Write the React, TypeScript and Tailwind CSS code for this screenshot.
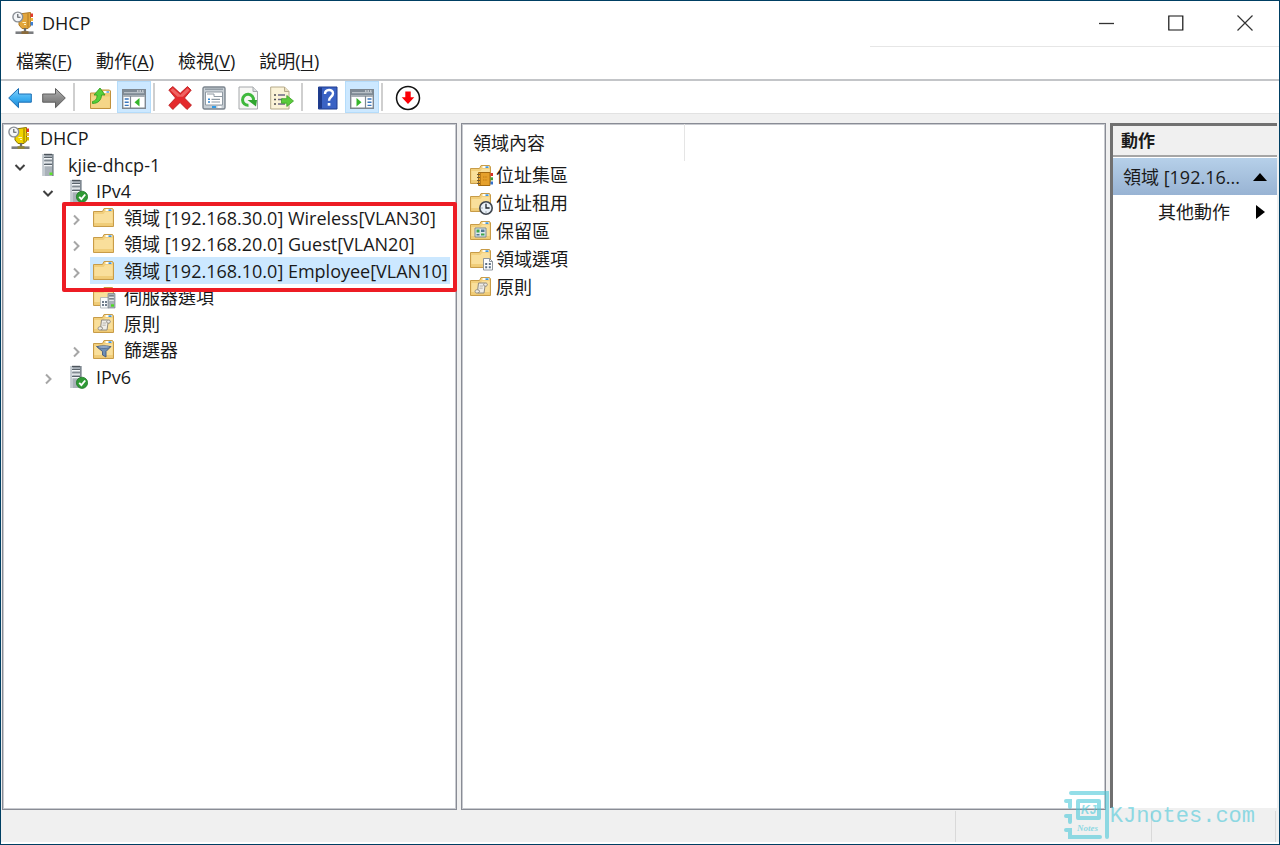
import type { ReactNode } from "react";

function Svg({ size = 24, children }: { size?: number; children: ReactNode }) {
  return (
    <svg width={size} height={size} viewBox="0 0 24 24" fill="none" aria-hidden="true" className="shrink-0">
      {children}
    </svg>
  );
}

/* ---------- DHCP console icons ---------- */

function DhcpIcon({ bright = false }: { bright?: boolean }) {
  const body = bright ? "#f0d400" : "#e3a63c";
  const edge = bright ? "#8a7400" : "#b07a22";
  return (
    <Svg>
      <path d="M7 3 18.500 1.500V15L16 17.500H10L7 14z" fill={body} stroke={edge} strokeWidth="1" />
      <path d="M16 2.500v14" stroke={edge} strokeWidth="1" />
      <path d="M10.500 11.500h3.500M12 13.500h2" stroke="#fff3c4" strokeWidth="1" />
      <path d="M18.500 2.500h2.500v3.500h-2.500z" fill="#e23b2e" />
      <path d="M18.500 7h2.500v3h-2.500z" fill="#efb63a" />
      <path d="M18.500 11h2.500v3.500h-2.500z" fill={bright ? "#d6b800" : "#3b7fd4"} />
      <path d="M13 17v4" stroke="#6e6e6e" strokeWidth="2.400" />
      <path d="M3.500 21.700h18" stroke="#7b7d80" strokeWidth="2.600" />
      <path d="M9.500 20.200h7v2.800h-7z" fill={bright ? "#8f8538" : "#8a6a3a"} />
      <circle cx="5.800" cy="6" r="4.900" fill="#f4f6f8" stroke="#8b9096" strokeWidth="1.400" />
      <path d="M5.800 3v3.200h2.700" stroke="#50555b" strokeWidth="1.100" />
    </Svg>
  );
}

function ServerShape() {
  return (
    <>
      <path d="M6.500 1h11v22h-11z" fill="#a9b1b9" />
      <path d="M6.500 1h2.500v22H6.500z" fill="#c3cad0" />
      <path d="M16 1h1.500v22H16z" fill="#7f8890" />
      <path d="M8 1.500h8" stroke="#4d555c" strokeWidth="1.400" />
      <path d="M8 4.500h8M8 8h8M8 11.500h8" stroke="#5b646c" strokeWidth="1.200" />
      <path d="M8 5.700h8M8 9.200h8M8 12.700h8" stroke="#f3f6f8" strokeWidth="1.200" />
    </>
  );
}

function ServerIcon() {
  return (
    <Svg>
      <ServerShape />
      <path d="M13.500 19.500h3v2.500h-3z" fill="#5be22a" />
    </Svg>
  );
}

function ServerOkIcon() {
  return (
    <Svg>
      <ServerShape />
      <circle cx="18" cy="17.800" r="5.600" fill="#2f9a35" stroke="#1f7a28" strokeWidth=".8" />
      <path d="m15.200 17.800 2.200 2.300 3.800-4.600" stroke="#fff" strokeWidth="1.900" />
    </Svg>
  );
}

function FolderShape() {
  return (
    <>
      <path d="M1.500 5.500h9l1.500-3h8.500l1 1.500v16.500h-20z" fill="#f2cf7c" stroke="#c89c48" strokeWidth="1" />
      <path d="M2.500 8h9l1.500-2h7.500v13.500h-18z" fill="#f9df9b" />
      <path d="M2 17h19v3H2z" fill="#edc46b" opacity=".7" />
      <path d="M13.500 3h6.500v2h-6.500z" fill="#fffdf4" />
      <path d="M16.500 3.300h3V5h-3z" fill="#3f94dd" />
    </>
  );
}

function FolderIcon() {
  return (
    <Svg>
      <FolderShape />
    </Svg>
  );
}

function ServerOptionsIcon() {
  return (
    <Svg>
      <FolderShape />
      <path d="M8.500 12.500h8V23h-8z" fill="#f8fafc" stroke="#a7adb4" strokeWidth=".8" />
      <path d="M10 16h2v2h-2zm3 0h2v2h-2zm-3 3h2v2h-2zm3 0h2v2h-2z" fill="#6f7c8b" />
      <path d="M16 8.500h7V23h-7z" fill="#a9b1b9" stroke="#7c858d" strokeWidth=".7" />
      <path d="M17.200 11h4.600m-4.600 3h4.600" stroke="#4d555c" strokeWidth="1" />
      <path d="M17.200 12.200h4.600m-4.600 3h4.600" stroke="#fff" strokeWidth="1" />
      <path d="M19 19.300h3v2.400h-3z" fill="#4bdc20" />
    </Svg>
  );
}

function PolicyIcon() {
  return (
    <Svg>
      <FolderShape />
      <path
        d="M9.500 8h7.700c1.500.4 1.500 2.800 0 3.200H16l-1 6.800H7.500c-2-.3-1.800-3 0-3.200h1.200z"
        fill="#efede8"
        stroke="#8f8a80"
        strokeWidth="1"
      />
      <path d="M15.200 8.500c-1 1-.6 2.500.8 2.700M9 14.800c2 .2 2 2.700.2 3" stroke="#8f8a80" strokeWidth="1" />
      <path d="M10.700 11h3.400m-3.700 2.200h3.300" stroke="#a9a59c" strokeWidth=".8" />
    </Svg>
  );
}

function FilterIcon() {
  return (
    <Svg>
      <FolderShape />
      <path d="M4.500 8.500h14.500l-5 5V19l-3.500-2v-3.500z" fill="#6f8fb5" stroke="#42587a" strokeWidth=".9" />
      <ellipse cx="11.800" cy="9" rx="6.500" ry="1.300" fill="#9db6d4" stroke="#42587a" strokeWidth=".7" />
    </Svg>
  );
}

function PoolIcon() {
  return (
    <Svg>
      <FolderShape />
      <path d="M9.500 9.500H21V22.500H9.500z" fill="#e5a02b" stroke="#a56a10" strokeWidth="1" />
      <path d="M11.500 10v12" stroke="#b97a18" strokeWidth="1" />
      <path d="M8 11.500h3m-3 3h3m-3 3h3m-3 3h3" stroke="#6e5a34" strokeWidth="1" />
      <path d="M14 14h4.500M14 17h4.500" stroke="#c47d12" strokeWidth="1.200" strokeDasharray="1.500 .7" />
      <path d="M21.500 10H24v3h-2.500z" fill="#d92f25" />
      <path d="M21.500 14.300H24v3h-2.500z" fill="#3f9d3a" />
      <path d="M21.500 18.500H24v3h-2.500z" fill="#3272cf" />
    </Svg>
  );
}

function LeaseIcon() {
  return (
    <Svg>
      <FolderShape />
      <circle cx="17" cy="17" r="6.200" fill="#e8f0f8" stroke="#40474f" strokeWidth="1.600" />
      <path d="M17 12.800V17h3.600" stroke="#20262c" strokeWidth="1.300" />
      <path d="M17 20.500v1M12.500 17h1" stroke="#68727c" strokeWidth="1" />
    </Svg>
  );
}

function ReservationIcon() {
  return (
    <Svg>
      <FolderShape />
      <path d="M6 9h11v9H6z" fill="#dfe8ee" stroke="#7d8b93" strokeWidth="1" />
      <path d="M7.500 10.500h3v3h-3zM12 14.500h3.500v2H12z" fill="#3da54a" />
      <path d="M12 10.500h3.500v2.500H12zM7.500 15h3v1.500h-3z" fill="#4f7690" />
    </Svg>
  );
}

function ScopeOptionsIcon() {
  return (
    <Svg>
      <FolderShape />
      <path d="M14.500 11.500h6l3 3V23h-9z" fill="#fbfcfd" stroke="#858c94" strokeWidth=".9" />
      <path d="M20.500 11.500v3h3" stroke="#858c94" strokeWidth=".9" />
      <path d="M16.200 16h2v2h-2zm3.600 0h2v2h-2zm-3.600 3.300h2v2h-2zm3.600 0h2v2h-2z" fill="#5b6d82" />
    </Svg>
  );
}

/* ---------- Toolbar icons ---------- */

function Arrow({ forward = false }: { forward?: boolean }) {
  return (
    <Svg>
      <defs>
        <linearGradient id={forward ? "arrowF" : "arrowB"} x1="0" y1="0" x2="0" y2="1">
          <stop offset="0" stopColor={forward ? "#b5b5b5" : "#8bd3fa"} />
          <stop offset=".5" stopColor={forward ? "#8c8c8c" : "#3fb0f2"} />
          <stop offset="1" stopColor={forward ? "#6d6d6d" : "#1f86d3"} />
        </linearGradient>
      </defs>
      <path
        d={forward ? "M23.300 12 13.500 2.500V8H.700v8.200h12.800v5.500z" : "M.700 12l9.800-9.500V8h12.800v8.200H10.500v5.500z"}
        fill={forward ? "url(#arrowF)" : "url(#arrowB)"}
        stroke={forward ? "#5e5e5e" : "#1b6fb5"}
        strokeWidth="1"
        strokeLinejoin="round"
      />
    </Svg>
  );
}

function UpFolderIcon() {
  return (
    <Svg>
      <path d="M2.500 7h8l2-3h9l1 1v17.500h-20z" fill="#f0cb74" stroke="#c1923c" strokeWidth="1" />
      <path d="M3.200 10.500h18.600v11.300H3.200z" fill="#f5d688" />
      <path d="M15.500 5h6v2h-6z" fill="#fff" />
      <path d="M18.500 5.300H21v1.400h-2.500z" fill="#3f94dd" />
      <path
        d="M4.500 15.500c3.500-.8 4.500-3 4.500-6.500H6L12 2l5 7h-3.500c0 5-3.500 8.500-9 8.500z"
        fill="#55cf3a"
        stroke="#2c9a1d"
        strokeWidth=".8"
      />
    </Svg>
  );
}

function PaneIcon({ right = false }: { right?: boolean }) {
  return (
    <Svg>
      <path d="M.700 3.700h22.600v18.600H.700z" fill="#fff" stroke="#7e8790" strokeWidth="1.400" />
      <path d="M1 4h22v5H1z" fill="#7f8a94" />
      <path d="M2 6.700h20" stroke="#c5ccd2" strokeWidth="1" />
      <path d="M15 5h1.500m1 0H19m1 0h1.500" stroke="#fff" strokeWidth="1.200" />
      <path d="M1 10h22" stroke="#a9b0b6" strokeWidth="2" />
      {right ? (
        <>
          <path d="M15.500 10v12" stroke="#7e8790" strokeWidth="1.200" />
          <path d="M17.500 13h4m-4 3.200h4m-4 3.200h4" stroke="#3976bd" strokeWidth="1.400" />
          <path d="m6.500 12 5 4.200-5 4.200z" fill="#35b52b" />
        </>
      ) : (
        <>
          <path d="M8.500 10v12" stroke="#7e8790" strokeWidth="1.200" />
          <path d="M2.700 13h4m-4 3.200h4m-4 3.200h4" stroke="#3976bd" strokeWidth="1.400" />
          <path d="m17.500 12-5 4.200 5 4.200z" fill="#35b52b" />
        </>
      )}
    </Svg>
  );
}

function DeleteIcon() {
  return (
    <Svg>
      <path
        d="M.800 4 4.800.500l7.400 6.800L19.500.500l3.700 3.700L16.500 12l7 7.200-4.500 4.300-7-7-7.200 7-4-4.300L7.500 12z"
        fill="#e42a2d"
        stroke="#b51518"
        strokeWidth=".8"
        strokeLinejoin="round"
      />
      <path d="m2.500 4.200 2.300-2 7.500 6.900 7.200-6.900 2 2-6.500 6.600H9.500z" fill="#f27c79" opacity=".7" />
    </Svg>
  );
}

function PropertiesIcon() {
  return (
    <Svg>
      <rect x="1" y="1" width="22" height="22" rx="1.500" fill="#c9d0d6" stroke="#7c858e" strokeWidth="1.400" />
      <path d="M3 3.200h18" stroke="#8a949d" strokeWidth="1.300" />
      <path d="M3.500 6h17v13h-17z" fill="#fff" stroke="#909aa3" strokeWidth="1" />
      <path d="M5 8h7v2.500h8" stroke="#909aa3" strokeWidth="1" />
      <path d="M6 13.300h2M6 16h2" stroke="#3487cf" strokeWidth="1.500" />
      <path d="M9.500 13.300H18M9.500 16H18" stroke="#8f9aa4" strokeWidth="1.200" />
      <path d="M10 21h4" stroke="#1f96e8" strokeWidth="1.800" />
      <path d="M15.500 21h4" stroke="#fff" strokeWidth="1.800" />
    </Svg>
  );
}

function RefreshIcon() {
  return (
    <Svg>
      <path d="M3 1h14l4.500 4.500V23H3z" fill="#f7f7f5" stroke="#a5a8ab" strokeWidth="1" />
      <path d="M17 1v4.500h4.500" fill="#dde0e2" stroke="#a5a8ab" strokeWidth="1" />
      <path d="M12.500 19.300a5.500 5.500 0 1 1 5-4.800" stroke="#3fb83c" strokeWidth="3" />
      <path d="M11.500 14h9.500l-1 6.500z" fill="#2fa52e" />
    </Svg>
  );
}

function ExportIcon() {
  return (
    <Svg>
      <path d="M.700 1h13.800L19 5.500V23H.700z" fill="#fbf3d8" stroke="#b5aa8a" strokeWidth="1" />
      <path d="M14.500 1v4.500H19" fill="#e9dfbd" stroke="#b5aa8a" strokeWidth="1" />
      <path d="M4 9h2M4 13.500h2M4 18h2" stroke="#4d4d4d" strokeWidth="1.500" />
      <path d="M8 9h7M8 13.500h5M8 18h7" stroke="#6e6a85" strokeWidth="1.300" />
      <path d="M11.500 12.700h5.300V9.500L23.500 15l-6.700 5.500v-3.300h-5.300z" fill="#5bcb3c" stroke="#3a9e24" strokeWidth=".8" />
    </Svg>
  );
}

function HelpIcon() {
  return (
    <Svg>
      <path d="M2.500 1h18.500v22h-18.500z" fill="#3a62c4" stroke="#1f3d8f" strokeWidth="1" />
      <path d="M3 1.500h3v21H3z" fill="#1e3a8a" />
      <path d="M9 8c0-5.300 8-5.300 8-.5 0 3.300-4 3.300-4 7.200" stroke="#fff" strokeWidth="2.400" />
      <path d="M11.700 17h2.700v2.700h-2.700z" fill="#fff" />
    </Svg>
  );
}

function DownCircleIcon() {
  return (
    <Svg size={26}>
      <circle cx="12" cy="12" r="10.600" fill="#fff" stroke="#111" strokeWidth="1.400" />
      <path d="M9.500 6h5v5.200h3.300L12 17.500l-5.800-6.300h3.300z" fill="#fb0007" />
    </Svg>
  );
}

function Chevron({ open = false }: { open?: boolean }) {
  return (
    <svg width="12" height="12" viewBox="0 0 12 12" fill="none" aria-hidden="true">
      {open ? (
        <path d="m1.500 4 4.500 4.500L10.500 4" stroke="#404040" strokeWidth="2" />
      ) : (
        <path d="m4 1.500 4.500 4.500L4 10.500" stroke="#a6a6a6" strokeWidth="2" />
      )}
    </svg>
  );
}

/* ---------- Data ---------- */

type TreeNode = {
  label: string;
  indent: string;
  icon: ReactNode;
  state?: "open" | "closed";
  root?: boolean;
  selected?: boolean;
};

const tree: TreeNode[] = [
  { label: "DHCP", indent: "pl-0", icon: <DhcpIcon bright />, root: true },
  { label: "kjie-dhcp-1", indent: "pl-0", icon: <ServerIcon />, state: "open" },
  { label: "IPv4", indent: "pl-7", icon: <ServerOkIcon />, state: "open" },
  { label: "領域 [192.168.30.0] Wireless[VLAN30]", indent: "pl-14", icon: <FolderIcon />, state: "closed" },
  { label: "領域 [192.168.20.0] Guest[VLAN20]", indent: "pl-14", icon: <FolderIcon />, state: "closed" },
  { label: "領域 [192.168.10.0] Employee[VLAN10]", indent: "pl-14", icon: <FolderIcon />, state: "closed", selected: true },
  { label: "伺服器選項", indent: "pl-14", icon: <ServerOptionsIcon /> },
  { label: "原則", indent: "pl-14", icon: <PolicyIcon /> },
  { label: "篩選器", indent: "pl-14", icon: <FilterIcon />, state: "closed" },
  { label: "IPv6", indent: "pl-7", icon: <ServerOkIcon />, state: "closed" },
];

const contents: { label: string; icon: ReactNode }[] = [
  { label: "位址集區", icon: <PoolIcon /> },
  { label: "位址租用", icon: <LeaseIcon /> },
  { label: "保留區", icon: <ReservationIcon /> },
  { label: "領域選項", icon: <ScopeOptionsIcon /> },
  { label: "原則", icon: <PolicyIcon /> },
];

const menus = [
  { label: "檔案", key: "F" },
  { label: "動作", key: "A" },
  { label: "檢視", key: "V" },
  { label: "說明", key: "H" },
];

/* ---------- Pieces ---------- */

function ToolButton({ label, active = false, children }: { label: string; active?: boolean; children: ReactNode }) {
  return (
    <button
      type="button"
      aria-label={label}
      aria-pressed={active || undefined}
      className={
        active
          ? "flex h-8 w-[34px] items-center justify-center border border-[#b5dcfa] bg-[#cce8ff] pt-px"
          : "flex h-8 w-[34px] items-center justify-center pt-px"
      }
    >
      {children}
    </button>
  );
}

function Separator() {
  return <div className="mr-2 ml-0.5 h-7 w-0.5 bg-[#cfcfcf]" />;
}

function TitleBar() {
  return (
    <header className="flex h-11 items-center pl-[11px]">
      <DhcpIcon />
      <h1 className="ml-1.5 flex-1 pb-px text-[18px] leading-6">DHCP</h1>
      <button type="button" aria-label="Minimize" className="flex h-full w-[69px] items-center justify-center">
        <svg width="16" height="16" viewBox="0 0 16 16" aria-hidden="true">
          <path d="M0 8.500h15" stroke="#333" strokeWidth="1.300" />
        </svg>
      </button>
      <button type="button" aria-label="Maximize" className="flex h-full w-[69px] items-center justify-center">
        <svg width="16" height="16" viewBox="0 0 16 16" fill="none" aria-hidden="true">
          <path d="M.800 1h14v14H.800z" stroke="#111" strokeWidth="1.200" />
        </svg>
      </button>
      <button type="button" aria-label="Close" className="flex h-full w-[69px] items-center justify-center">
        <svg width="16" height="16" viewBox="0 0 16 16" aria-hidden="true">
          <path d="m.500.500 15 15m0-15-15 15" stroke="#333" strokeWidth="1.200" />
        </svg>
      </button>
    </header>
  );
}

function MenuBar() {
  return (
    <nav className="relative flex h-[34px] items-center gap-6 pb-0.5 pl-[15px]">
      <div className="absolute top-px right-0 left-[68%] h-px bg-[#e6e6e6]" />
      {menus.map((m) => (
        <button key={m.key} type="button" className="text-[18px] leading-6 whitespace-nowrap">
          {m.label}(<span className="underline underline-offset-2">{m.key}</span>)
        </button>
      ))}
    </nav>
  );
}

function Toolbar() {
  return (
    <div role="toolbar" className="flex h-[35px] items-center border-t-2 border-b border-t-[#c3c5c8] border-b-[#e2e2e2] pl-0.5">
      <ToolButton label="Back"><Arrow /></ToolButton>
      <ToolButton label="Forward"><Arrow forward /></ToolButton>
      <Separator />
      <ToolButton label="Up one level"><UpFolderIcon /></ToolButton>
      <ToolButton label="Console tree" active><PaneIcon /></ToolButton>
      <Separator />
      <ToolButton label="Delete"><DeleteIcon /></ToolButton>
      <ToolButton label="Properties"><PropertiesIcon /></ToolButton>
      <ToolButton label="Refresh"><RefreshIcon /></ToolButton>
      <ToolButton label="Export list"><ExportIcon /></ToolButton>
      <Separator />
      <ToolButton label="Help"><HelpIcon /></ToolButton>
      <ToolButton label="Action pane" active><PaneIcon right /></ToolButton>
      <Separator />
      <ToolButton label="Deactivate"><DownCircleIcon /></ToolButton>
    </div>
  );
}

function TreePane() {
  return (
    <section className="relative w-[455px] shrink-0 border border-[#898c95] bg-white pt-px pl-[3px] shadow-[inset_0_0_0_1px_#c8cacf]">
      <ul>
        {tree.map((n, i) => (
          <li key={i} className={`flex odd:h-[26px] even:h-[27px] ${n.indent}`}>
            {!n.root && (
              <span className="flex w-7 shrink-0 items-center justify-center pt-1">
                {n.state && (
                  <button type="button" aria-label={`${n.label} ${n.state}`}>
                    <Chevron open={n.state === "open"} />
                  </button>
                )}
              </span>
            )}
            <button
              type="button"
              className={
                n.selected
                  ? "flex h-full items-center bg-[#cce8ff] pr-0.5 text-[18px] leading-6 whitespace-nowrap"
                  : "flex h-full items-center pr-0.5 text-[18px] leading-6 whitespace-nowrap"
              }
            >
              <span className="mr-1.5 flex w-7 shrink-0 justify-center">{n.icon}</span>
              {n.label}
            </button>
          </li>
        ))}
      </ul>
      <div className="pointer-events-none absolute top-[78px] -right-px left-[59px] h-[90px] rounded-xs border-4 border-[#ed1c24]" />
    </section>
  );
}

function ContentPane() {
  return (
    <section className="min-w-0 flex-1 border border-[#898c95] bg-white pl-px shadow-[inset_0_0_0_1px_#c8cacf]">
      <table className="border-separate border-spacing-0">
        <thead>
          <tr>
            <th className="h-[37px] w-[222px] border-r border-[#e5e5e5] pl-2.5 text-left text-[18px] leading-6 font-normal">
              領域內容
            </th>
          </tr>
        </thead>
        <tbody>
          {contents.map((c) => (
            <tr key={c.label}>
              <td className="h-7 p-0 pl-1.5">
                <span className="flex items-center gap-[3px] text-[18px] leading-6">
                  {c.icon}
                  {c.label}
                </span>
              </td>
            </tr>
          ))}
        </tbody>
      </table>
    </section>
  );
}

function ActionsPane() {
  return (
    <aside className="mb-0.5 w-[167px] shrink-0 border-t-[3px] border-l-[3px] border-[#707070] bg-white">
      <h2 className="flex h-[31px] items-center border-b-2 border-[#a5a5a5] bg-[#f0f0f0] pl-2 text-[17px] leading-6 font-bold">
        動作
      </h2>
      <button
        type="button"
        className="mt-px flex h-[37px] w-full items-center justify-between bg-linear-to-b from-[#b6d0e9] to-[#98b3d3] pr-2.5 pl-2.5 text-[18px] leading-6"
      >
        領域 [192.16...
        <svg width="14" height="8" viewBox="0 0 14 8" aria-hidden="true">
          <path d="M7 0 14 8H0z" fill="#000" />
        </svg>
      </button>
      <button type="button" className="flex h-[34px] w-full items-center justify-between pr-3 pl-[45px] text-[18px] leading-6">
        其他動作
        <svg width="9" height="14" viewBox="0 0 9 14" aria-hidden="true">
          <path d="M0 0 9 7 0 14z" fill="#000" />
        </svg>
      </button>
    </aside>
  );
}

function StatusBar() {
  return (
    <footer className="flex h-[34px] justify-end border-b-2 border-white pt-px pr-[3px]">
      <div className="w-[196px] border-l border-[#d9d9d9]" />
      <div className="w-[125px] border-x border-[#d9d9d9]" />
    </footer>
  );
}

function Watermark() {
  return (
    <div className="pointer-events-none absolute right-6 bottom-1 flex items-center text-[#4cc9da] opacity-60">
      <svg width="46" height="50" viewBox="0 0 46 50" fill="none" stroke="currentColor" strokeWidth="4" aria-hidden="true">
        <path d="M7 3h36v44" strokeLinecap="round" />
        <path d="M2 11h4v6M2 26h4v6M2 40h4v7h30" strokeLinecap="round" />
        <path d="M14 11h21v17H14z" strokeLinejoin="round" />
        <text
          x="17"
          y="24"
          fontSize="12"
          fontStyle="italic"
          fontWeight="700"
          fill="currentColor"
          stroke="none"
          fontFamily="Liberation Sans, sans-serif"
        >
          KJ
        </text>
        <text
          x="13"
          y="41"
          fontSize="9"
          fontStyle="italic"
          fontWeight="700"
          fill="currentColor"
          stroke="none"
          fontFamily="Liberation Serif, serif"
        >
          Notes
        </text>
      </svg>
      <span className="pt-[3px] font-['Liberation_Mono',monospace] text-[22px] leading-7">KJnotes.com</span>
    </div>
  );
}

export default function App() {
  return (
    <div className="relative flex h-screen flex-col overflow-hidden border border-[#003f63] bg-white font-['Open_Sans','Noto_Sans_CJK_TC',sans-serif] text-[#1a1a1a]">
      <TitleBar />
      <MenuBar />
      <Toolbar />
      <main className="flex min-h-0 flex-1 flex-col bg-[#f0f0f0]">
        <div className="flex min-h-0 flex-1 gap-1 pt-[9px] pr-0.5 pl-px">
          <TreePane />
          <ContentPane />
          <ActionsPane />
        </div>
        <StatusBar />
      </main>
      <Watermark />
    </div>
  );
}
